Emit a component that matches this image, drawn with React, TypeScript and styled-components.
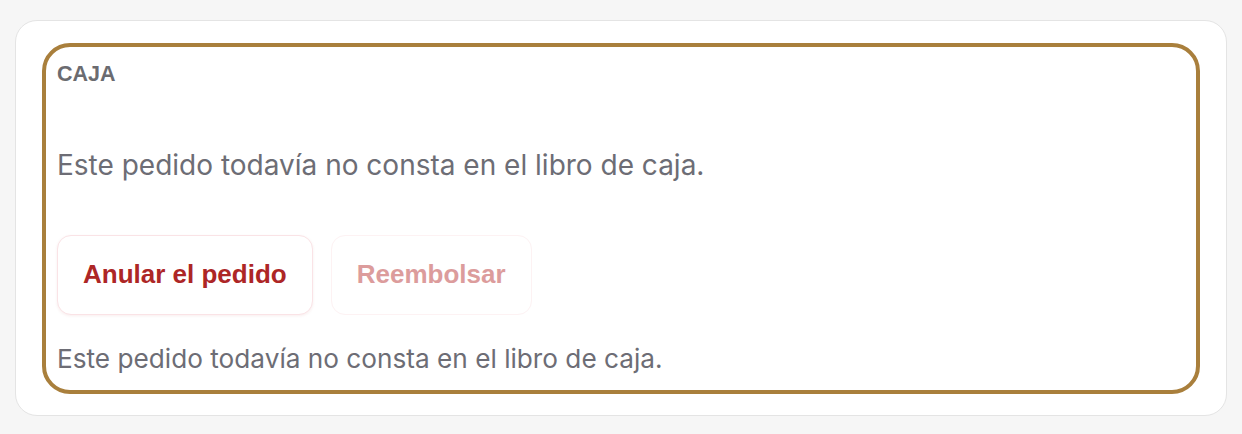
import React from "react";
import styled, { createGlobalStyle } from "styled-components";

const Global = createGlobalStyle`
  html, body { margin: 0; padding: 0; background: #f6f6f6; }
  body { font-family: Inter, "Liberation Sans", sans-serif; }
`;

const Page = styled.div`
  padding: 20px 15px 18px 15px;
`;

const Card = styled.section`
  background: #ffffff;
  border: 1px solid #e4e4e4;
  border-radius: 22px;
  padding: 22px 26px 21px 26px;
`;

const Highlight = styled.div`
  border: 4.5px solid #a97f3c;
  border-radius: 28px;
  padding: 14px 11px 15px 11px;
  display: flex;
  flex-direction: column;
`;

const Label = styled.h3`
  margin: 0;
  font-family: "Liberation Sans", Arial, sans-serif;
  font-weight: 700;
  font-size: 21.5px;
  line-height: 26px;
  color: #6b6b70;
`;

const Message = styled.p`
  margin: 60.5px 0 0 0;
  font-family: Inter, sans-serif;
  font-size: 28px;
  line-height: 34px;
  color: #6d6d75;
`;

const Actions = styled.div`
  display: flex;
  gap: 18px;
  margin-top: 53px;
`;

const ActionButton = styled.button<{ $disabled?: boolean }>`
  height: 80px;
  padding: 0 25px;
  background: #ffffff;
  border: 1px solid ${(p) => (p.$disabled ? "#fdf2f3" : "#fae3e6")};
  border-radius: 14px;
  box-shadow: ${(p) => (p.$disabled ? "none" : "0 1px 3px rgba(176, 40, 42, 0.08)")};
  font-family: "Liberation Sans", Arial, sans-serif;
  font-weight: 700;
  font-size: 26px;
  color: ${(p) => (p.$disabled ? "#dc9c9c" : "#ad2626")};
  cursor: ${(p) => (p.$disabled ? "default" : "pointer")};
`;

const Note = styled.p`
  margin: 28.5px 0 0 0;
  font-family: Inter, sans-serif;
  font-size: 26.2px;
  line-height: 32px;
  color: #6d6d75;
`;

export default function App() {
  return (
    <>
      <Global />
      <Page>
        <Card>
          <Highlight>
            <Label>CAJA</Label>
            <Message>Este pedido todavía no consta en el libro de caja.</Message>
            <Actions>
              <ActionButton>Anular el pedido</ActionButton>
              <ActionButton $disabled disabled>
                Reembolsar
              </ActionButton>
            </Actions>
            <Note>Este pedido todavía no consta en el libro de caja.</Note>
          </Highlight>
        </Card>
      </Page>
    </>
  );
}
